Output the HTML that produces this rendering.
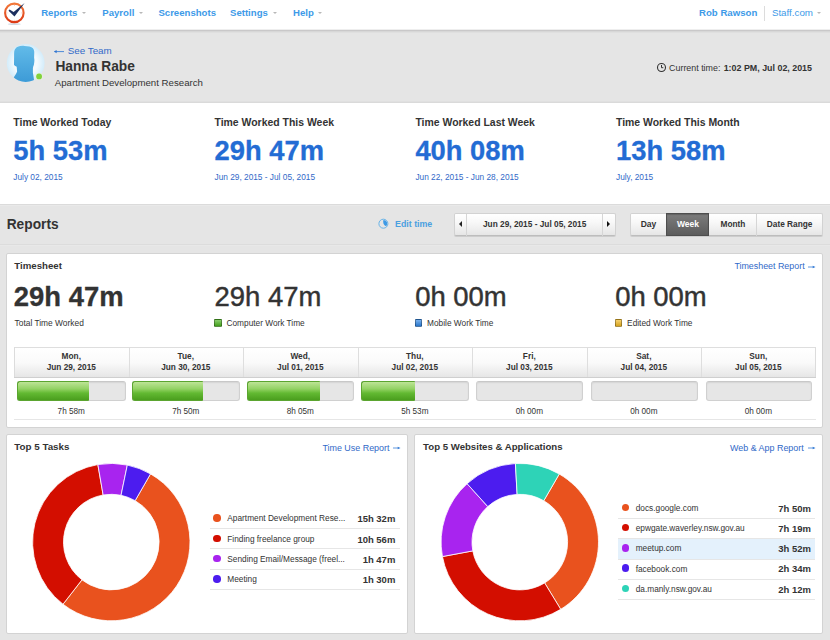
<!DOCTYPE html>
<html><head><meta charset="utf-8">
<style>
html,body{margin:0;padding:0;}
body{width:830px;height:640px;position:relative;overflow:hidden;background:#e5e5e5;font-family:"Liberation Sans",sans-serif;}
.t{position:absolute;white-space:nowrap;line-height:1;}
.abs{position:absolute;}
</style></head><body>

<div class="abs" style="left:0;top:0;width:830px;height:29px;background:#fff;"></div>
<div class="abs" style="left:0;top:29px;width:830px;height:1px;background:#eeeeee;"></div>
<div class="abs" style="left:0;top:30px;width:830px;height:1px;background:#c9c8c9;"></div>
<div class="abs" style="left:0;top:31px;width:830px;height:1px;background:#d7d7d7;"></div>
<div class="abs" style="left:0;top:32px;width:830px;height:1px;background:#dfdfdf;"></div>
<svg class="abs" style="left:0;top:0" width="40" height="29" viewBox="0 0 40 29">
<defs><linearGradient id="lg" x1="0" y1="0" x2="0" y2="1"><stop offset="0" stop-color="#f2783a"/><stop offset="1" stop-color="#dc3a16"/></linearGradient></defs>
<ellipse cx="14.3" cy="24.2" rx="6.5" ry="0.9" fill="#c5d0dc" opacity="0.8"/>
<circle cx="14.35" cy="12.9" r="9.25" fill="#fff" stroke="url(#lg)" stroke-width="2.1"/>
<g fill="#f3b8a0"><rect x="14" y="5" width="0.7" height="1"/><rect x="14" y="19.8" width="0.7" height="1"/><rect x="6.6" y="12.6" width="1" height="0.7"/><rect x="21.2" y="12.6" width="1" height="0.7"/></g>
<path d="M8.5,10.7 L9.6,9.4 L13.6,12.1 L24.6,3.1 L14.5,16.5 Z" fill="#1d2f5e"/>
</svg>
<div class="t" style="left:41.20px;top:8.47px;font-size:9.600px;font-weight:bold;color:#3d9ae8;">Reports</div>

<div class="t" style="left:102.30px;top:8.47px;font-size:9.600px;font-weight:bold;color:#3d9ae8;">Payroll</div>

<div class="t" style="left:158.40px;top:8.47px;font-size:9.600px;font-weight:bold;color:#3d9ae8;">Screenshots</div>

<div class="t" style="left:230.00px;top:8.47px;font-size:9.600px;font-weight:bold;color:#3d9ae8;">Settings</div>

<div class="t" style="left:293.00px;top:8.47px;font-size:9.600px;font-weight:bold;color:#3d9ae8;">Help</div>

<div class="abs" style="left:81.8px;top:11.6px;width:0;height:0;border-left:2.5px solid transparent;border-right:2.5px solid transparent;border-top:2.6px solid #b8b8b8;"></div>
<div class="abs" style="left:139.0px;top:11.6px;width:0;height:0;border-left:2.5px solid transparent;border-right:2.5px solid transparent;border-top:2.6px solid #b8b8b8;"></div>
<div class="abs" style="left:272.8px;top:11.6px;width:0;height:0;border-left:2.5px solid transparent;border-right:2.5px solid transparent;border-top:2.6px solid #b8b8b8;"></div>
<div class="abs" style="left:317.8px;top:11.6px;width:0;height:0;border-left:2.5px solid transparent;border-right:2.5px solid transparent;border-top:2.6px solid #b8b8b8;"></div>
<div class="t" style="left:699.00px;top:8.44px;font-size:9.640px;font-weight:bold;color:#3d9ae8;">Rob Rawson</div>

<div class="abs" style="left:764px;top:6px;width:1px;height:15px;background:#dcdcdc;"></div>
<div class="t" style="left:771.90px;top:8.33px;font-size:9.770px;color:#3d9ae8;">Staff.com</div>

<div class="abs" style="left:816.8px;top:11.6px;width:0;height:0;border-left:2.5px solid transparent;border-right:2.5px solid transparent;border-top:2.6px solid #b8b8b8;"></div>
<svg class="abs" style="left:0;top:40px" width="50" height="50" viewBox="0 40 50 50">
<defs><clipPath id="av"><circle cx="25.7" cy="63" r="18.9"/></clipPath>
<radialGradient id="abg" cx="0.5" cy="0.5" r="0.5"><stop offset="0.6" stop-color="#f4fafe"/><stop offset="1" stop-color="#d3ecfa"/></radialGradient>
<linearGradient id="ag" x1="0" y1="0" x2="0" y2="1"><stop offset="0" stop-color="#62bbe9"/><stop offset="1" stop-color="#3c9ad6"/></linearGradient></defs>
<circle cx="25.7" cy="63" r="18.9" fill="url(#abg)"/>
<g clip-path="url(#av)">
<path d="M17.75,46.8 C20,45.8 23,45.6 24.6,46.1 C28,46.2 31.5,46.8 32.9,48.2 C34,49.5 34.3,51 34.25,53 L34.1,58 C34.6,59.5 34.4,62 33.9,64.7 C33.4,66 33,67 32.9,68.1 L32.9,72.9 C33.5,76 34,79 34.25,83 L13,83 C13.2,80 13.4,79 13.6,77.75 C15,75.5 16.5,73.5 17.1,71.6 L16.7,66.75 C15.5,66 14.2,65.5 14.0,64.7 L14.1,56 C14.1,53 14.2,51.5 14.3,50.9 C15.2,48.6 16.3,47.3 17.75,46.8 Z" fill="url(#ag)"/>
</g>
<circle cx="39.1" cy="76.4" r="3.5" fill="#e5f4dc"/>
<circle cx="39.1" cy="76.4" r="2.9" fill="#82d23c"/>
</svg>
<svg class="abs" style="left:53px;top:48px" width="13" height="8" viewBox="0 0 13 8"><path d="M1.4,3.6 H11" stroke="#3a7fd6" stroke-width="0.9"/><path d="M1,3.6 L3.6,2 L3.6,5.2 Z" fill="#2f74d0"/></svg>
<div class="t" style="left:67.70px;top:45.77px;font-size:9.840px;color:#3169c8;">See Team</div>

<div class="t" style="left:55.40px;top:60.46px;font-size:13.750px;font-weight:bold;color:#333333;">Hanna Rabe</div>

<div class="t" style="left:54.80px;top:78.01px;font-size:9.670px;color:#333333;">Apartment Development Research</div>

<svg class="abs" style="left:656px;top:61.5px" width="11" height="11" viewBox="0 0 11 11">
<circle cx="5.5" cy="5.5" r="4" fill="none" stroke="#333" stroke-width="1.1"/>
<path d="M5.5,3 V5.7 H7.3" fill="none" stroke="#333" stroke-width="1"/>
</svg>
<div class="t" style="left:669.10px;top:63.77px;font-size:8.900px;color:#333333;">Current time:</div>

<div class="t" style="left:723.70px;top:63.77px;font-size:8.890px;font-weight:bold;color:#333333;">1:02 PM, Jul 02, 2015</div>

<div class="abs" style="left:0;top:103px;width:830px;height:101px;background:#fff;"></div>
<div class="abs" style="left:0;top:101px;width:830px;height:1px;background:#e0e0e0;"></div>
<div class="abs" style="left:0;top:102px;width:830px;height:1px;background:#dadada;"></div>
<div class="abs" style="left:0;top:204px;width:830px;height:1px;background:#dbdbdb;"></div>
<div class="abs" style="left:0;top:205px;width:830px;height:1px;background:#e9e9e9;"></div>
<div class="t" style="left:13.30px;top:117.95px;font-size:10.450px;font-weight:bold;color:#333333;">Time Worked Today</div>

<div class="t" style="left:13.30px;top:137.25px;font-size:27.350px;font-weight:bold;color:#236cd4;-webkit-text-stroke:0.3px #236cd4;">5h 53m</div>

<div class="t" style="left:13.30px;top:172.72px;font-size:8.300px;color:#3169c8;">July 02, 2015</div>

<div class="t" style="left:214.50px;top:117.95px;font-size:10.450px;font-weight:bold;color:#333333;">Time Worked This Week</div>

<div class="t" style="left:214.50px;top:137.25px;font-size:27.350px;font-weight:bold;color:#236cd4;-webkit-text-stroke:0.3px #236cd4;">29h 47m</div>

<div class="t" style="left:214.50px;top:172.72px;font-size:8.300px;color:#3169c8;">Jun 29, 2015 - Jul 05, 2015</div>

<div class="t" style="left:415.40px;top:117.95px;font-size:10.450px;font-weight:bold;color:#333333;">Time Worked Last Week</div>

<div class="t" style="left:415.40px;top:137.25px;font-size:27.350px;font-weight:bold;color:#236cd4;-webkit-text-stroke:0.3px #236cd4;">40h 08m</div>

<div class="t" style="left:415.40px;top:172.72px;font-size:8.300px;color:#3169c8;">Jun 22, 2015 - Jun 28, 2015</div>

<div class="t" style="left:616.00px;top:117.95px;font-size:10.450px;font-weight:bold;color:#333333;">Time Worked This Month</div>

<div class="t" style="left:616.00px;top:137.25px;font-size:27.350px;font-weight:bold;color:#236cd4;-webkit-text-stroke:0.3px #236cd4;">13h 58m</div>

<div class="t" style="left:616.00px;top:172.72px;font-size:8.300px;color:#3169c8;">July, 2015</div>

<div class="abs" style="left:0;top:244px;width:830px;height:1px;background:#dcdcdc;"></div>
<div class="abs" style="left:0;top:245px;width:830px;height:1px;background:#e8e8e8;"></div>
<div class="t" style="left:6.70px;top:217.85px;font-size:13.760px;font-weight:bold;color:#333333;">Reports</div>

<svg class="abs" style="left:374px;top:214px" width="20" height="20" viewBox="374 214 20 20">
<circle cx="383.4" cy="223.7" r="4.5" fill="none" stroke="#5aaee8" stroke-width="0.9"/>
<path d="M383.4,219.9 A3.8,3.8 0 0 1 386.3,226.2 C384.3,225.8 382.6,223.3 383.4,219.9 Z" fill="#3d9ae6"/>
</svg>
<div class="t" style="left:395.00px;top:220.03px;font-size:8.830px;font-weight:bold;color:#4aa0e0;">Edit time</div>

<div class="abs" style="left:454px;top:212.6px;width:159.5px;height:21.6px;border:1px solid #d2d2d2;border-bottom-color:#bdbdbd;border-radius:2px;background:linear-gradient(#ffffff 0%,#f8f8f8 40%,#e6e6e6 100%);box-shadow:0 1px 0.5px rgba(0,0,0,0.10);"></div>
<div class="abs" style="left:466px;top:213.5px;width:1px;height:22px;background:#d6d6d6;"></div>
<div class="abs" style="left:602px;top:213.5px;width:1px;height:22px;background:#d6d6d6;"></div>
<div class="abs" style="left:459px;top:220.5px;width:0;height:0;border-top:3px solid transparent;border-bottom:3px solid transparent;border-right:3px solid #222;"></div>
<div class="abs" style="left:606.8px;top:220.8px;width:0;height:0;border-top:3px solid transparent;border-bottom:3px solid transparent;border-left:3.3px solid #111;"></div>
<div class="t" style="left:483.00px;top:220.47px;font-size:8.300px;font-weight:bold;color:#333333;">Jun 29, 2015 - Jul 05, 2015</div>

<div class="abs" style="left:630px;top:212.6px;width:190.5px;height:21.6px;border:1px solid #d2d2d2;border-bottom-color:#bdbdbd;border-radius:2px;background:linear-gradient(#ffffff 0%,#f8f8f8 40%,#e6e6e6 100%);box-shadow:0 1px 0.5px rgba(0,0,0,0.10);"></div>
<div class="abs" style="left:666px;top:212.6px;width:41px;height:21.6px;border:1px solid #4e4e4e;background:linear-gradient(#7c7c7c,#5c5c5c);box-shadow:inset 0 1px 1px rgba(0,0,0,0.2);"></div>
<div class="abs" style="left:755.9px;top:213.5px;width:1px;height:22px;background:#d6d6d6;"></div>
<div class="t" style="left:640.70px;top:220.30px;font-size:8.500px;font-weight:bold;color:#333333;">Day</div>

<div class="t" style="left:677.00px;top:220.30px;font-size:8.500px;font-weight:bold;color:#fff;">Week</div>

<div class="t" style="left:720.50px;top:220.47px;font-size:8.300px;font-weight:bold;color:#333333;">Month</div>

<div class="t" style="left:766.80px;top:220.47px;font-size:8.300px;font-weight:bold;color:#333333;">Date Range</div>

<div class="abs" style="left:6px;top:253px;width:815px;height:173px;background:#fff;border:1px solid #d3d3d3;border-radius:2px;"></div>
<div class="t" style="left:14.30px;top:261.01px;font-size:9.680px;font-weight:bold;color:#333333;">Timesheet</div>

<div class="t" style="left:734.40px;top:262.47px;font-size:8.900px;color:#3169c8;">Timesheet Report</div>

<svg class="abs" style="left:806.90px;top:262.70px" width="9.30" height="8" viewBox="0 0 9.30 8"><path d="M1,4 H7.10" stroke="#3a7fd6" stroke-width="0.8"/><path d="M8.50,4 L5.70,2.8 L5.70,5.2 Z" fill="#3a7fd6"/></svg>

<div class="t" style="left:13.80px;top:282.56px;font-size:27.450px;font-weight:bold;color:#333333;-webkit-text-stroke:0.3px #333;">29h 47m</div>

<div class="t" style="left:14.60px;top:319.09px;font-size:8.400px;color:#333333;">Total Time Worked</div>

<div class="t" style="left:214.60px;top:282.56px;font-size:27.450px;color:#333333;-webkit-text-stroke:0.45px #333;">29h 47m</div>

<div class="abs" style="left:214.3px;top:319.2px;width:7.5px;height:7.5px;box-sizing:border-box;border:0.7px solid rgba(0,0,0,0.3);border-radius:1px;background:linear-gradient(rgba(255,255,255,0.35),rgba(0,0,0,0.12)),#4cb520;"></div>
<div class="t" style="left:226.50px;top:319.17px;font-size:8.300px;color:#333333;">Computer Work Time</div>

<div class="t" style="left:415.20px;top:282.56px;font-size:27.450px;color:#333333;-webkit-text-stroke:0.45px #333;">0h 00m</div>

<div class="abs" style="left:414.9px;top:319.2px;width:7.5px;height:7.5px;box-sizing:border-box;border:0.7px solid rgba(0,0,0,0.3);border-radius:1px;background:linear-gradient(rgba(255,255,255,0.35),rgba(0,0,0,0.12)),#2f86e6;"></div>
<div class="t" style="left:427.10px;top:319.17px;font-size:8.300px;color:#333333;">Mobile Work Time</div>

<div class="t" style="left:615.20px;top:282.56px;font-size:27.450px;color:#333333;-webkit-text-stroke:0.45px #333;">0h 00m</div>

<div class="abs" style="left:614.9px;top:319.2px;width:7.5px;height:7.5px;box-sizing:border-box;border:0.7px solid rgba(0,0,0,0.3);border-radius:1px;background:linear-gradient(rgba(255,255,255,0.35),rgba(0,0,0,0.12)),#f2b922;"></div>
<div class="t" style="left:627.10px;top:319.17px;font-size:8.300px;color:#333333;">Edited Work Time</div>

<div class="abs" style="left:14.0px;top:346.8px;width:801.6px;height:31px;background:linear-gradient(#ffffff 0%,#fafafa 50%,#e6e6e6 100%);border-top:1px solid #dedede;border-bottom:1px solid #cfcfcf;box-sizing:border-box;"></div>
<div class="abs" style="left:14.0px;top:346.8px;width:1px;height:30.4px;background:#dcdcdc;"></div>
<div class="abs" style="left:814.6px;top:346.8px;width:1px;height:30.4px;background:#dcdcdc;"></div>
<div class="t" style="left:-128.74px;width:400px;text-align:center;top:352.47px;font-size:8.300px;font-weight:bold;color:#333333;">Mon,</div>

<div class="t" style="left:-128.74px;width:400px;text-align:center;top:364.40px;font-size:8.270px;font-weight:bold;color:#333333;">Jun 29, 2015</div>

<div class="abs" style="left:17.0px;top:381.3px;width:108.6px;height:19.4px;box-sizing:border-box;background:#e6e6e6;border:1px solid #d0d0d0;border-top-color:#c8c8c8;border-radius:3px;box-shadow:inset 0 1px 1.5px rgba(0,0,0,0.08);"></div>
<div class="abs" style="left:17.0px;top:381.3px;width:72.4px;height:19.4px;box-sizing:border-box;background:linear-gradient(#bde496 0%,#93d264 38%,#62b932 62%,#4a9e1e 100%);border:1px solid #5ba530;border-right:none;border-radius:3px 1px 1px 3px;"></div>
<div class="t" style="left:-128.74px;width:400px;text-align:center;top:407.56px;font-size:8.200px;color:#333333;">7h 58m</div>

<div class="abs" style="left:128.5px;top:346.8px;width:1px;height:30.4px;background:#dedede;"></div>
<div class="t" style="left:-14.23px;width:400px;text-align:center;top:352.47px;font-size:8.300px;font-weight:bold;color:#333333;">Tue,</div>

<div class="t" style="left:-14.23px;width:400px;text-align:center;top:364.40px;font-size:8.270px;font-weight:bold;color:#333333;">Jun 30, 2015</div>

<div class="abs" style="left:131.8px;top:381.3px;width:108.2px;height:19.4px;box-sizing:border-box;background:#e6e6e6;border:1px solid #d0d0d0;border-top-color:#c8c8c8;border-radius:3px;box-shadow:inset 0 1px 1.5px rgba(0,0,0,0.08);"></div>
<div class="abs" style="left:131.8px;top:381.3px;width:71.2px;height:19.4px;box-sizing:border-box;background:linear-gradient(#bde496 0%,#93d264 38%,#62b932 62%,#4a9e1e 100%);border:1px solid #5ba530;border-right:none;border-radius:3px 1px 1px 3px;"></div>
<div class="t" style="left:-14.23px;width:400px;text-align:center;top:407.56px;font-size:8.200px;color:#333333;">7h 50m</div>

<div class="abs" style="left:243.0px;top:346.8px;width:1px;height:30.4px;background:#dedede;"></div>
<div class="t" style="left:100.29px;width:400px;text-align:center;top:352.47px;font-size:8.300px;font-weight:bold;color:#333333;">Wed,</div>

<div class="t" style="left:100.29px;width:400px;text-align:center;top:364.40px;font-size:8.270px;font-weight:bold;color:#333333;">Jul 01, 2015</div>

<div class="abs" style="left:246.6px;top:381.3px;width:107.7px;height:19.4px;box-sizing:border-box;background:#e6e6e6;border:1px solid #d0d0d0;border-top-color:#c8c8c8;border-radius:3px;box-shadow:inset 0 1px 1.5px rgba(0,0,0,0.08);"></div>
<div class="abs" style="left:246.6px;top:381.3px;width:73.3px;height:19.4px;box-sizing:border-box;background:linear-gradient(#bde496 0%,#93d264 38%,#62b932 62%,#4a9e1e 100%);border:1px solid #5ba530;border-right:none;border-radius:3px 1px 1px 3px;"></div>
<div class="t" style="left:100.29px;width:400px;text-align:center;top:407.56px;font-size:8.200px;color:#333333;">8h 05m</div>

<div class="abs" style="left:357.5px;top:346.8px;width:1px;height:30.4px;background:#dedede;"></div>
<div class="t" style="left:214.80px;width:400px;text-align:center;top:352.47px;font-size:8.300px;font-weight:bold;color:#333333;">Thu,</div>

<div class="t" style="left:214.80px;width:400px;text-align:center;top:364.40px;font-size:8.270px;font-weight:bold;color:#333333;">Jul 02, 2015</div>

<div class="abs" style="left:361.4px;top:381.3px;width:107.3px;height:19.4px;box-sizing:border-box;background:#e6e6e6;border:1px solid #d0d0d0;border-top-color:#c8c8c8;border-radius:3px;box-shadow:inset 0 1px 1.5px rgba(0,0,0,0.08);"></div>
<div class="abs" style="left:361.4px;top:381.3px;width:53.3px;height:19.4px;box-sizing:border-box;background:linear-gradient(#bde496 0%,#93d264 38%,#62b932 62%,#4a9e1e 100%);border:1px solid #5ba530;border-right:none;border-radius:3px 1px 1px 3px;"></div>
<div class="t" style="left:214.80px;width:400px;text-align:center;top:407.56px;font-size:8.200px;color:#333333;">5h 53m</div>

<div class="abs" style="left:472.1px;top:346.8px;width:1px;height:30.4px;background:#dedede;"></div>
<div class="t" style="left:329.31px;width:400px;text-align:center;top:352.47px;font-size:8.300px;font-weight:bold;color:#333333;">Fri,</div>

<div class="t" style="left:329.31px;width:400px;text-align:center;top:364.40px;font-size:8.270px;font-weight:bold;color:#333333;">Jul 03, 2015</div>

<div class="abs" style="left:476.2px;top:381.3px;width:106.9px;height:19.4px;box-sizing:border-box;background:#e6e6e6;border:1px solid #d0d0d0;border-top-color:#c8c8c8;border-radius:3px;box-shadow:inset 0 1px 1.5px rgba(0,0,0,0.08);"></div>
<div class="t" style="left:329.31px;width:400px;text-align:center;top:407.56px;font-size:8.200px;color:#333333;">0h 00m</div>

<div class="abs" style="left:586.6px;top:346.8px;width:1px;height:30.4px;background:#dedede;"></div>
<div class="t" style="left:443.83px;width:400px;text-align:center;top:352.47px;font-size:8.300px;font-weight:bold;color:#333333;">Sat,</div>

<div class="t" style="left:443.83px;width:400px;text-align:center;top:364.40px;font-size:8.270px;font-weight:bold;color:#333333;">Jul 04, 2015</div>

<div class="abs" style="left:591.0px;top:381.3px;width:106.5px;height:19.4px;box-sizing:border-box;background:#e6e6e6;border:1px solid #d0d0d0;border-top-color:#c8c8c8;border-radius:3px;box-shadow:inset 0 1px 1.5px rgba(0,0,0,0.08);"></div>
<div class="t" style="left:443.83px;width:400px;text-align:center;top:407.56px;font-size:8.200px;color:#333333;">0h 00m</div>

<div class="abs" style="left:701.1px;top:346.8px;width:1px;height:30.4px;background:#dedede;"></div>
<div class="t" style="left:558.34px;width:400px;text-align:center;top:352.47px;font-size:8.300px;font-weight:bold;color:#333333;">Sun,</div>

<div class="t" style="left:558.34px;width:400px;text-align:center;top:364.40px;font-size:8.270px;font-weight:bold;color:#333333;">Jul 05, 2015</div>

<div class="abs" style="left:705.8px;top:381.3px;width:106.0px;height:19.4px;box-sizing:border-box;background:#e6e6e6;border:1px solid #d0d0d0;border-top-color:#c8c8c8;border-radius:3px;box-shadow:inset 0 1px 1.5px rgba(0,0,0,0.08);"></div>
<div class="t" style="left:558.34px;width:400px;text-align:center;top:407.56px;font-size:8.200px;color:#333333;">0h 00m</div>

<div class="abs" style="left:14.0px;top:418.8px;width:801.6px;height:1px;background:#e6e6e6;"></div>
<div class="abs" style="left:6px;top:434px;width:400px;height:198px;background:#fff;border:1px solid #d3d3d3;border-radius:2px;"></div>
<div class="abs" style="left:414px;top:434px;width:407px;height:198px;background:#fff;border:1px solid #d3d3d3;border-radius:2px;"></div>
<div class="t" style="left:14.30px;top:442.10px;font-size:9.800px;font-weight:bold;color:#333333;">Top 5 Tasks</div>

<div class="t" style="left:322.40px;top:444.03px;font-size:8.940px;color:#3169c8;">Time Use Report</div>

<svg class="abs" style="left:391.50px;top:443.60px" width="9.30" height="8" viewBox="0 0 9.30 8"><path d="M1,4 H7.10" stroke="#3a7fd6" stroke-width="0.8"/><path d="M8.50,4 L5.70,2.8 L5.70,5.2 Z" fill="#3a7fd6"/></svg>

<div class="t" style="left:423.10px;top:442.24px;font-size:9.640px;font-weight:bold;color:#333333;">Top 5 Websites &amp; Applications</div>

<div class="t" style="left:730.00px;top:444.03px;font-size:8.940px;color:#3169c8;">Web &amp; App Report</div>

<svg class="abs" style="left:806.90px;top:443.60px" width="9.30" height="8" viewBox="0 0 9.30 8"><path d="M1,4 H7.10" stroke="#3a7fd6" stroke-width="0.8"/><path d="M8.50,4 L5.70,2.8 L5.70,5.2 Z" fill="#3a7fd6"/></svg>

<svg class="abs" style="left:0;top:0" width="830" height="640" viewBox="0 0 830 640">
<path d="M150.531,473.875 A78.7,78.7 0 1 1 62.992,604.229 L81.959,579.835 A47.8,47.8 0 1 0 135.128,500.662 Z" fill="#e9521e" stroke="#fff" stroke-width="0.8"/>
<path d="M62.992,604.229 A78.7,78.7 0 0 1 97.862,464.556 L103.138,495.002 A47.8,47.8 0 0 0 81.959,579.835 Z" fill="#d30e00" stroke="#fff" stroke-width="0.8"/>
<path d="M97.862,464.556 A78.7,78.7 0 0 1 127.325,465.049 L121.033,495.301 A47.8,47.8 0 0 0 103.138,495.002 Z" fill="#a824ef" stroke="#fff" stroke-width="0.8"/>
<path d="M127.325,465.049 A78.7,78.7 0 0 1 150.531,473.875 L135.128,500.662 A47.8,47.8 0 0 0 121.033,495.301 Z" fill="#4c1cef" stroke="#fff" stroke-width="0.8"/>
<path d="M559.269,474.013 A78.7,78.7 0 0 1 560.721,609.325 L544.654,582.930 A47.8,47.8 0 0 0 543.772,500.746 Z" fill="#e9521e" stroke="#fff" stroke-width="0.8"/>
<path d="M560.721,609.325 A78.7,78.7 0 0 1 442.438,556.550 L472.813,550.876 A47.8,47.8 0 0 0 544.654,582.930 Z" fill="#d30e00" stroke="#fff" stroke-width="0.8"/>
<path d="M442.438,556.550 A78.7,78.7 0 0 1 467.087,483.662 L487.784,506.606 A47.8,47.8 0 0 0 472.813,550.876 Z" fill="#a824ef" stroke="#fff" stroke-width="0.8"/>
<path d="M467.087,483.662 A78.7,78.7 0 0 1 515.406,463.523 L517.131,494.375 A47.8,47.8 0 0 0 487.784,506.606 Z" fill="#4c1cef" stroke="#fff" stroke-width="0.8"/>
<path d="M515.406,463.523 A78.7,78.7 0 0 1 559.269,474.013 L543.772,500.746 A47.8,47.8 0 0 0 517.131,494.375 Z" fill="#2ed3b7" stroke="#fff" stroke-width="0.8"/>
</svg>
<div class="abs" style="left:213.2px;top:514.1px;width:7.6px;height:7.6px;border-radius:50%;background:#e9521e;"></div>
<div class="t" style="left:227.30px;top:514.47px;font-size:8.300px;color:#333333;">Apartment Development Rese...</div>

<div class="t" style="right:434.70px;top:514.28px;font-size:9.480px;font-weight:bold;color:#333333;">15h 32m</div>

<div class="abs" style="left:209.6px;top:527.8px;width:190.3px;height:1px;background:#e6e6e6;"></div>
<div class="abs" style="left:213.2px;top:534.6px;width:7.6px;height:7.6px;border-radius:50%;background:#d30e00;"></div>
<div class="t" style="left:227.30px;top:534.97px;font-size:8.300px;color:#333333;">Finding freelance group</div>

<div class="t" style="right:434.70px;top:534.78px;font-size:9.480px;font-weight:bold;color:#333333;">10h 56m</div>

<div class="abs" style="left:209.6px;top:548.3px;width:190.3px;height:1px;background:#e6e6e6;"></div>
<div class="abs" style="left:213.2px;top:554.9px;width:7.6px;height:7.6px;border-radius:50%;background:#a824ef;"></div>
<div class="t" style="left:227.30px;top:555.27px;font-size:8.300px;color:#333333;">Sending Email/Message (freel...</div>

<div class="t" style="right:434.70px;top:555.08px;font-size:9.480px;font-weight:bold;color:#333333;">1h 47m</div>

<div class="abs" style="left:209.6px;top:568.6px;width:190.3px;height:1px;background:#e6e6e6;"></div>
<div class="abs" style="left:213.2px;top:575.1px;width:7.6px;height:7.6px;border-radius:50%;background:#4c1cef;"></div>
<div class="t" style="left:227.30px;top:575.47px;font-size:8.300px;color:#333333;">Meeting</div>

<div class="t" style="right:434.70px;top:575.28px;font-size:9.480px;font-weight:bold;color:#333333;">1h 30m</div>

<div class="abs" style="left:209.6px;top:588.8px;width:190.3px;height:1px;background:#e6e6e6;"></div>
<div class="abs" style="left:618px;top:538.6px;width:196.6px;height:20.5px;background:#e4f1fc;"></div>
<div class="abs" style="left:621.6px;top:503.6px;width:7.6px;height:7.6px;border-radius:50%;background:#e9521e;"></div>
<div class="t" style="left:635.70px;top:503.97px;font-size:8.300px;color:#333333;">docs.google.com</div>

<div class="t" style="right:19.10px;top:503.78px;font-size:9.480px;font-weight:bold;color:#333333;">7h 50m</div>

<div class="abs" style="left:618px;top:517.6px;width:196.6px;height:1px;background:#e6e6e6;"></div>
<div class="abs" style="left:621.6px;top:523.7px;width:7.6px;height:7.6px;border-radius:50%;background:#d30e00;"></div>
<div class="t" style="left:635.70px;top:524.07px;font-size:8.300px;color:#333333;">epwgate.waverley.nsw.gov.au</div>

<div class="t" style="right:19.10px;top:523.88px;font-size:9.480px;font-weight:bold;color:#333333;">7h 19m</div>

<div class="abs" style="left:618px;top:538.1px;width:196.6px;height:1px;background:#e6e6e6;"></div>
<div class="abs" style="left:621.6px;top:544.1px;width:7.6px;height:7.6px;border-radius:50%;background:#a824ef;"></div>
<div class="t" style="left:635.70px;top:544.47px;font-size:8.300px;color:#333333;">meetup.com</div>

<div class="t" style="right:19.10px;top:544.28px;font-size:9.480px;font-weight:bold;color:#333333;">3h 52m</div>

<div class="abs" style="left:618px;top:558.6px;width:196.6px;height:1px;background:#e6e6e6;"></div>
<div class="abs" style="left:621.6px;top:564.3px;width:7.6px;height:7.6px;border-radius:50%;background:#4c1cef;"></div>
<div class="t" style="left:635.70px;top:564.67px;font-size:8.300px;color:#333333;">facebook.com</div>

<div class="t" style="right:19.10px;top:564.48px;font-size:9.480px;font-weight:bold;color:#333333;">2h 34m</div>

<div class="abs" style="left:618px;top:578.7px;width:196.6px;height:1px;background:#e6e6e6;"></div>
<div class="abs" style="left:621.6px;top:584.5px;width:7.6px;height:7.6px;border-radius:50%;background:#2ed3b7;"></div>
<div class="t" style="left:635.70px;top:584.87px;font-size:8.300px;color:#333333;">da.manly.nsw.gov.au</div>

<div class="t" style="right:19.10px;top:584.68px;font-size:9.480px;font-weight:bold;color:#333333;">2h 12m</div>

<div class="abs" style="left:618px;top:598.8px;width:196.6px;height:1px;background:#e6e6e6;"></div>
</body></html>
